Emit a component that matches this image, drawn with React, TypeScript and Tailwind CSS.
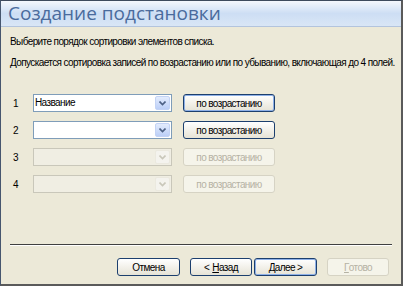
const uiFont = { fontFamily: '"Liberation Sans", Arial, sans-serif' };

function Chevron({ disabled }: { disabled?: boolean }) {
  return (
    <svg width="7" height="5" viewBox="0 0 7 5">
      <path
        d="M0.5 0.5 L3.5 3.5 L6.5 0.5"
        fill="none"
        stroke={disabled ? "#c9c7ba" : "#4d6185"}
        strokeWidth="1.6"
      />
    </svg>
  );
}

function Combo({ value, disabled }: { value?: string; disabled?: boolean }) {
  return (
    <div
      className={`flex h-[18px] w-[139px] items-stretch border ${
        disabled ? "border-[#c9c7ba] bg-[#f0eee3]" : "border-[#7f9db9] bg-white"
      }`}
    >
      <div className="flex-1 pl-[1px] leading-[16px] text-black">{value}</div>
      <div
        className={`m-px flex w-[15px] items-center justify-center rounded-[2px] border ${
          disabled
            ? "border-[#ebe9df] bg-[#f4f3ee]"
            : "border-[#c3d3f5] bg-gradient-to-b from-[#e3ecfd] to-[#bccff7]"
        }`}
      >
        <Chevron disabled={disabled} />
      </div>
    </div>
  );
}

function Btn({
  children,
  disabled,
  focused,
  w,
}: {
  children: React.ReactNode;
  disabled?: boolean;
  focused?: boolean;
  w: string;
}) {
  if (disabled)
    return (
      <div
        className={`${w} flex h-[18px] items-center justify-center rounded-[3px] border border-[#d6d3c4] bg-[#f5f4ea] text-[#b5b2a4]`}
      >
        {children}
      </div>
    );
  return (
    <div
      className={`${w} flex h-[18px] items-center justify-center rounded-[3px] border border-[#1c3f6e] bg-gradient-to-b from-white to-[#e6e3d6] text-black ${
        focused ? "shadow-[inset_0_0_0_1px_#8eb0e7]" : ""
      }`}
    >
      {children}
    </div>
  );
}

export default function App() {
  const rows = [
    { n: "1", value: "Название", disabled: false, focus: true },
    { n: "2", value: "", disabled: false, focus: false },
    { n: "3", value: "", disabled: true, focus: false },
    { n: "4", value: "", disabled: true, focus: false },
  ];

  return (
    <div
      style={uiFont}
      className="flex h-[286px] w-[403px] flex-col overflow-hidden border-b-2 border-l border-r-2 border-t border-b-[#5a5a5a] border-l-[#46566e] border-r-[#5a5a5a] border-t-[#3e4a5c] bg-[#ece9d8] text-[10px] tracking-[-0.6px]"
    >
      {/* заголовок */}
      <div
        className="h-[26px] shrink-0 border-b border-b-[#b3c4dd] bg-gradient-to-b from-[#f4f7fc] via-[#cddef4] to-[#d9e6f6] pl-[7px] text-[19px] leading-[25px] tracking-normal text-[#4a6b9d]"
        style={{ fontFamily: '"Open Sans", "Noto Sans", sans-serif' }}
      >
        Создание подстановки
      </div>

      <div className="flex flex-1 flex-col px-[9px] leading-[13px] text-black">
        <div className="mt-[8px] whitespace-nowrap">Выберите порядок сортировки элементов списка.</div>
        <div className="mt-[8px] whitespace-nowrap">
          Допускается сортировка записей по возрастанию или по убыванию, включающая до 4 полей.
        </div>

        <div className="mt-[25px] flex flex-col gap-[9px]">
          {rows.map((r) => (
            <div key={r.n} className="flex items-center">
              <span className="w-[23px] pl-[3px]">{r.n}</span>
              <Combo value={r.value} disabled={r.disabled} />
              <div className="ml-[11px]">
                <Btn w="w-[92px]" disabled={r.disabled} focused={r.focus}>
                  по возрастанию
                </Btn>
              </div>
            </div>
          ))}
        </div>

        <div className="mt-auto border-b border-b-white border-t border-t-[#404040]" />

        <div className="mb-[8px] mt-[12px] flex justify-end gap-[10px] pr-[3px]">
          <Btn w="w-[63px]">Отмена</Btn>
          <div className="flex gap-[2px]">
            <Btn w="w-[62px]">
              &lt; <span className="ml-[3px] underline">Н</span>азад
            </Btn>
            <Btn w="w-[63px]" focused>
              <span className="underline">Д</span>алее &gt;
            </Btn>
          </div>
          <Btn w="w-[62px]" disabled>
            <span className="underline">Г</span>отово
          </Btn>
        </div>
      </div>
    </div>
  );
}
